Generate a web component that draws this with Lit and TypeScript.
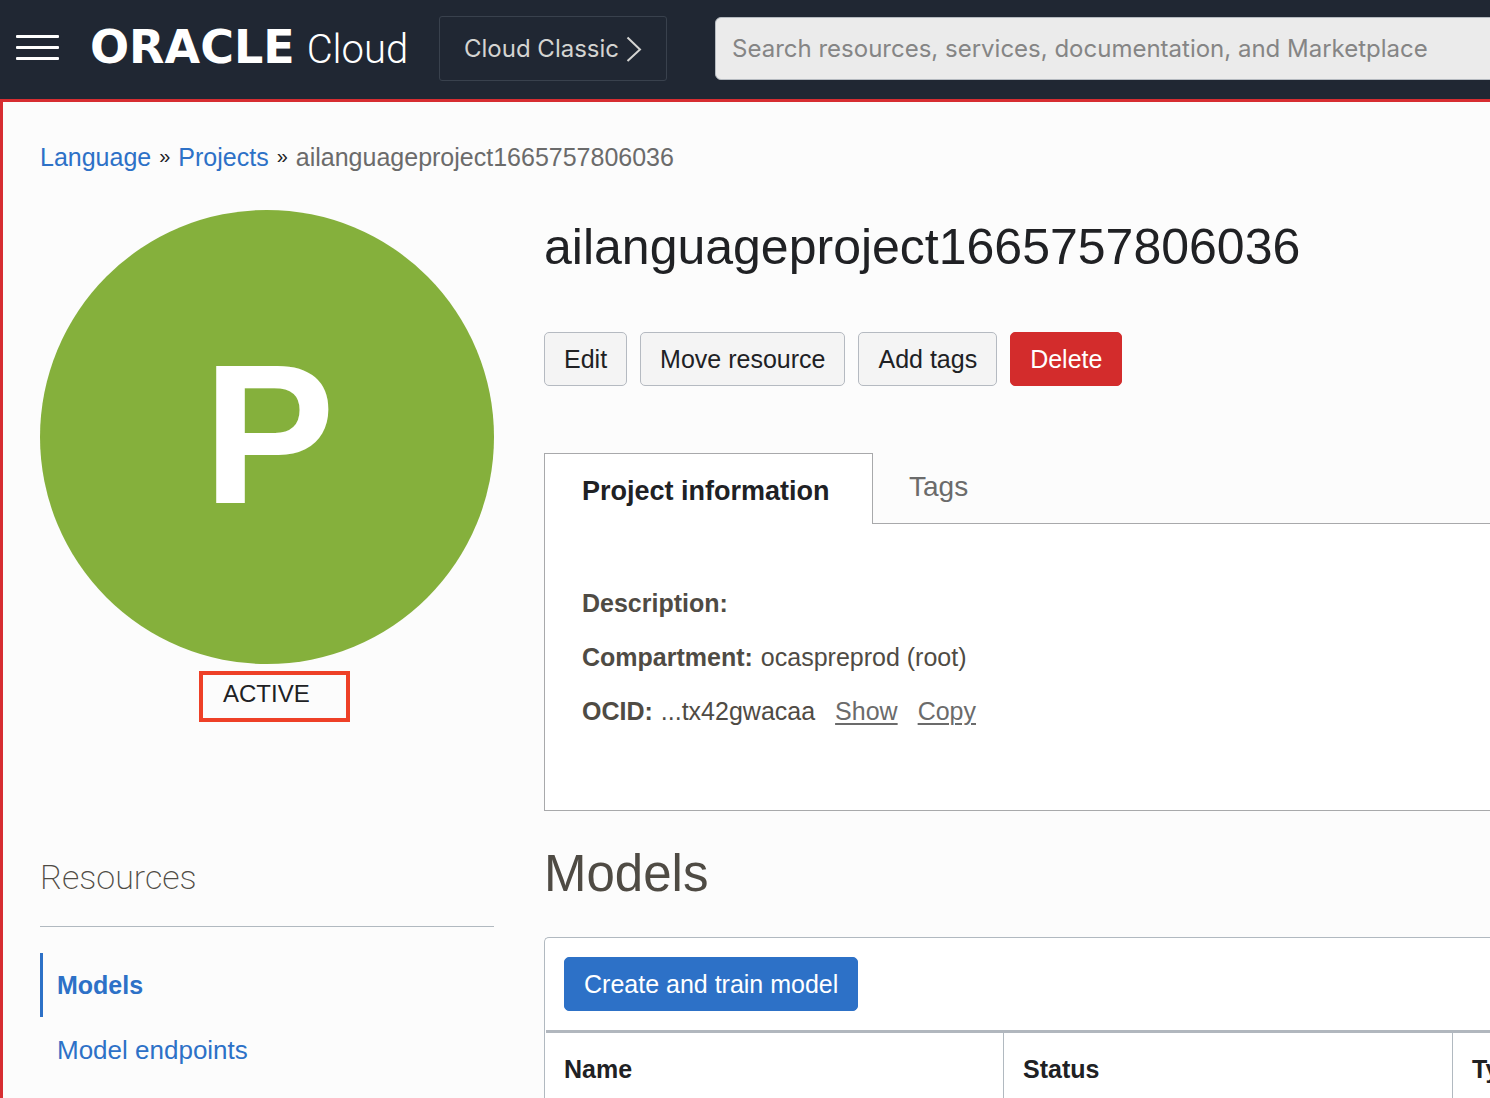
import { LitElement, html, css } from "lit";
import { customElement } from "lit/decorators.js";

@customElement("app-header")
export class AppHeader extends LitElement {
  static styles = css`
    :host {
      display: block;
      background: #202733;
      font-family: Inter, "Liberation Sans", sans-serif;
    }
    .bar {
      display: flex;
      align-items: center;
      height: 65px;
      padding: 16px 0 18px 16px;
    }
    button {
      font: inherit;
      background: none;
      cursor: pointer;
    }
    .menu {
      display: flex;
      padding: 0 0 2px;
      border: 0;
      margin-right: 31px;
    }
    .brand {
      display: flex;
      align-items: baseline;
      gap: 12px;
      width: 318px;
      margin-right: 31px;
      color: #fff;
      line-height: 60px;
      text-decoration: none;
      white-space: nowrap;
    }
    .oracle {
      font-family: "DejaVu Sans", sans-serif;
      font-weight: 700;
      font-size: 46px;
    }
    .cloud {
      font-family: Roboto, sans-serif;
      font-weight: 300;
      font-size: 40px;
    }
    .classic {
      display: flex;
      align-items: center;
      gap: 7px;
      height: 65px;
      padding: 0 24px;
      border: 1px solid #39414d;
      border-radius: 3px;
      color: #d4d4d2;
      font-size: 24px;
      white-space: nowrap;
    }
    .search {
      flex: 1;
      min-width: 0;
      box-sizing: border-box;
      height: 63px;
      margin: 0 -8px 0 48px;
      padding: 0 16px;
      border: 1px solid #b5bac0;
      border-radius: 6px;
      background: #ebebeb;
      color: #202124;
      font: inherit;
      font-size: 24px;
    }
    .search::placeholder {
      color: #858585;
      opacity: 1;
    }
  `;

  render() {
    return html`
      <header class="bar">
        <button class="menu" aria-label="Navigation menu">
          <svg width="43" height="26" viewBox="0 0 43 26" fill="#fff">
            <rect y="0" width="43" height="3" rx="1" />
            <rect y="11" width="43" height="3" rx="1" />
            <rect y="22" width="43" height="3" rx="1" />
          </svg>
        </button>
        <a class="brand" href="#"><span class="oracle">ORACLE</span><span class="cloud">Cloud</span></a>
        <button class="classic">
          Cloud Classic
          <svg width="16" height="26" viewBox="0 0 16 26" fill="none" stroke="#d4d4d2" stroke-width="2">
            <path d="M1.5 1.5 14 13.5 1.5 25" />
          </svg>
        </button>
        <input
          class="search"
          type="search"
          aria-label="Search"
          placeholder="Search resources, services, documentation, and Marketplace"
        />
      </header>
    `;
  }
}

@customElement("app-root")
export class AppRoot extends LitElement {
  static styles = css`
    :host {
      display: flex;
      flex-direction: column;
      min-height: 100vh;
      overflow: hidden;
      color: #202124;
      font-family: "Liberation Sans", Arial, sans-serif;
      font-size: 25px;
      line-height: 30px;
    }
    h1, h2, dl, dd, ul {
      margin: 0;
      padding: 0;
      font-weight: 400;
    }
    a {
      color: #2d71c7;
      text-decoration: none;
    }
    button {
      font: inherit;
      color: inherit;
      cursor: pointer;
      white-space: nowrap;
    }
    main {
      flex: 1;
      padding: 40px 0 0 37px;
      border-top: 3px solid #d72d31;
      border-left: 3px solid #d72d31;
      background: #fcfcfc;
    }
    .crumbs {
      display: flex;
      gap: 8px;
      color: #6b6b6b;
    }
    .sep {
      color: #202124;
      font-size: 20px;
      line-height: 28px;
    }
    .layout {
      display: grid;
      grid-template-columns: 454px minmax(0, 1fr);
      gap: 50px;
      margin-top: 38px;
    }
    .avatar {
      display: flex;
      align-items: center;
      justify-content: center;
      box-sizing: border-box;
      aspect-ratio: 1;
      padding: 0 0 4px 4px;
      border-radius: 50%;
      background: #85b03c;
      color: #fff;
      font-weight: 700;
      font-size: 198px;
      line-height: 200px;
    }
    .status {
      width: fit-content;
      margin: 7px 0 0 159px;
      padding: 0 36px 5px 20px;
      border: 4px solid #ee4027;
      font-size: 24px;
      line-height: 38px;
    }
    .resources {
      margin-top: 135px;
      padding-bottom: 29px;
      border-bottom: 1px solid #b1b9c0;
      color: #4f4b44;
      font-family: Roboto, sans-serif;
      font-weight: 200;
      font-size: 34px;
      line-height: 40px;
    }
    .nav {
      display: grid;
      gap: 1px;
      margin-top: 26px;
      list-style: none;
    }
    .nav a {
      display: block;
      padding-left: 14px;
      border-left: 3px solid transparent;
      font-size: 26px;
      line-height: 64px;
    }
    .nav .current {
      border-left-color: #2d71c7;
      font-weight: 700;
      font-size: 25px;
    }
    .title {
      margin-top: 7px;
      font-size: 50px;
      line-height: 60px;
    }
    .actions {
      display: flex;
      gap: 13px;
      margin-top: 55px;
    }
    .btn {
      height: 54px;
      padding: 0 19px;
      border: 1px solid #b5bac1;
      border-radius: 5px;
      background: #f4f4f4;
    }
    .danger {
      border-color: #d32c2c;
      background: #d32c2c;
      color: #fff;
    }
    .primary {
      border-color: #2d71c7;
      background: #2d71c7;
      color: #fff;
    }
    .tabs {
      display: flex;
      height: 70px;
      margin-top: 67px;
    }
    .tab {
      padding: 0 36px 2px;
      border: 0;
      background: none;
      color: #6b6b6b;
      font-size: 28px;
    }
    .tab.active {
      z-index: 1;
      min-width: 329px;
      margin-bottom: -1px;
      padding: 3px 37px 0;
      border: 1px solid #a8a9ab;
      border-bottom: 0;
      background: #fff;
      color: #202124;
      font-weight: 700;
      font-size: 27px;
      text-align: left;
    }
    .info {
      padding: 52px 37px 72px;
      border: 1px solid #a8a9ab;
      border-right: 0;
      background: #fff;
      color: #4f4b44;
      line-height: 54px;
    }
    .pair {
      display: flex;
      gap: 8px;
    }
    dt {
      font-weight: 700;
    }
    dd a {
      margin-left: 20px;
      color: #6b6b6b;
      text-decoration: underline;
      text-decoration-thickness: 2px;
      text-underline-offset: 3px;
    }
    .section {
      margin-top: 33px;
      color: #4f4b44;
      font-size: 51px;
      line-height: 60px;
    }
    .models {
      margin-top: 33px;
      border: 1px solid #b1b9c0;
      border-width: 1px 0 0 1px;
      border-radius: 5px 0 0 0;
      background: #fff;
    }
    .toolbar {
      padding: 19px;
      margin-left: 1px;
      padding-left: 18px;
      border-bottom: 3px solid #b1b7be;
    }
    .toolbar .btn {
      display: block;
    }
    table {
      width: 100%;
      table-layout: fixed;
      border-collapse: separate;
      border-spacing: 0;
    }
    .col-name {
      width: 459px;
    }
    .col-status {
      width: 449px;
    }
    th {
      padding: 20px 0 13px 19px;
      border-right: 1px solid #b1b9c0;
      line-height: 32px;
      text-align: left;
      white-space: nowrap;
    }
    th:last-child {
      border-right: 0;
    }
  `;

  render() {
    return html`
      <app-header></app-header>
      <main>
        <nav class="crumbs" aria-label="Breadcrumb">
          <a href="#">Language</a><span class="sep">»</span>
          <a href="#">Projects</a><span class="sep">»</span>
          <span>ailanguageproject1665757806036</span>
        </nav>
        <div class="layout">
          <aside>
            <div class="avatar">P</div>
            <div class="status">ACTIVE</div>
            <h2 class="resources">Resources</h2>
            <ul class="nav">
              <li><a class="current" href="#">Models</a></li>
              <li><a href="#">Model endpoints</a></li>
            </ul>
          </aside>
          <section>
            <h1 class="title">ailanguageproject1665757806036</h1>
            <div class="actions">
              <button class="btn">Edit</button>
              <button class="btn">Move resource</button>
              <button class="btn">Add tags</button>
              <button class="btn danger">Delete</button>
            </div>
            <div class="tabs" role="tablist">
              <button class="tab active" role="tab" aria-selected="true">Project information</button>
              <button class="tab" role="tab" aria-selected="false">Tags</button>
            </div>
            <dl class="info">
              <div class="pair"><dt>Description:</dt><dd></dd></div>
              <div class="pair"><dt>Compartment:</dt><dd>ocaspreprod (root)</dd></div>
              <div class="pair">
                <dt>OCID:</dt>
                <dd>...tx42gwacaa<a href="#">Show</a><a href="#">Copy</a></dd>
              </div>
            </dl>
            <h2 class="section">Models</h2>
            <div class="models">
              <div class="toolbar"><button class="btn primary">Create and train model</button></div>
              <table>
                <colgroup>
                  <col class="col-name" />
                  <col class="col-status" />
                  <col />
                </colgroup>
                <thead>
                  <tr><th>Name</th><th>Status</th><th>Type</th></tr>
                </thead>
              </table>
            </div>
          </section>
        </div>
      </main>
    `;
  }
}
